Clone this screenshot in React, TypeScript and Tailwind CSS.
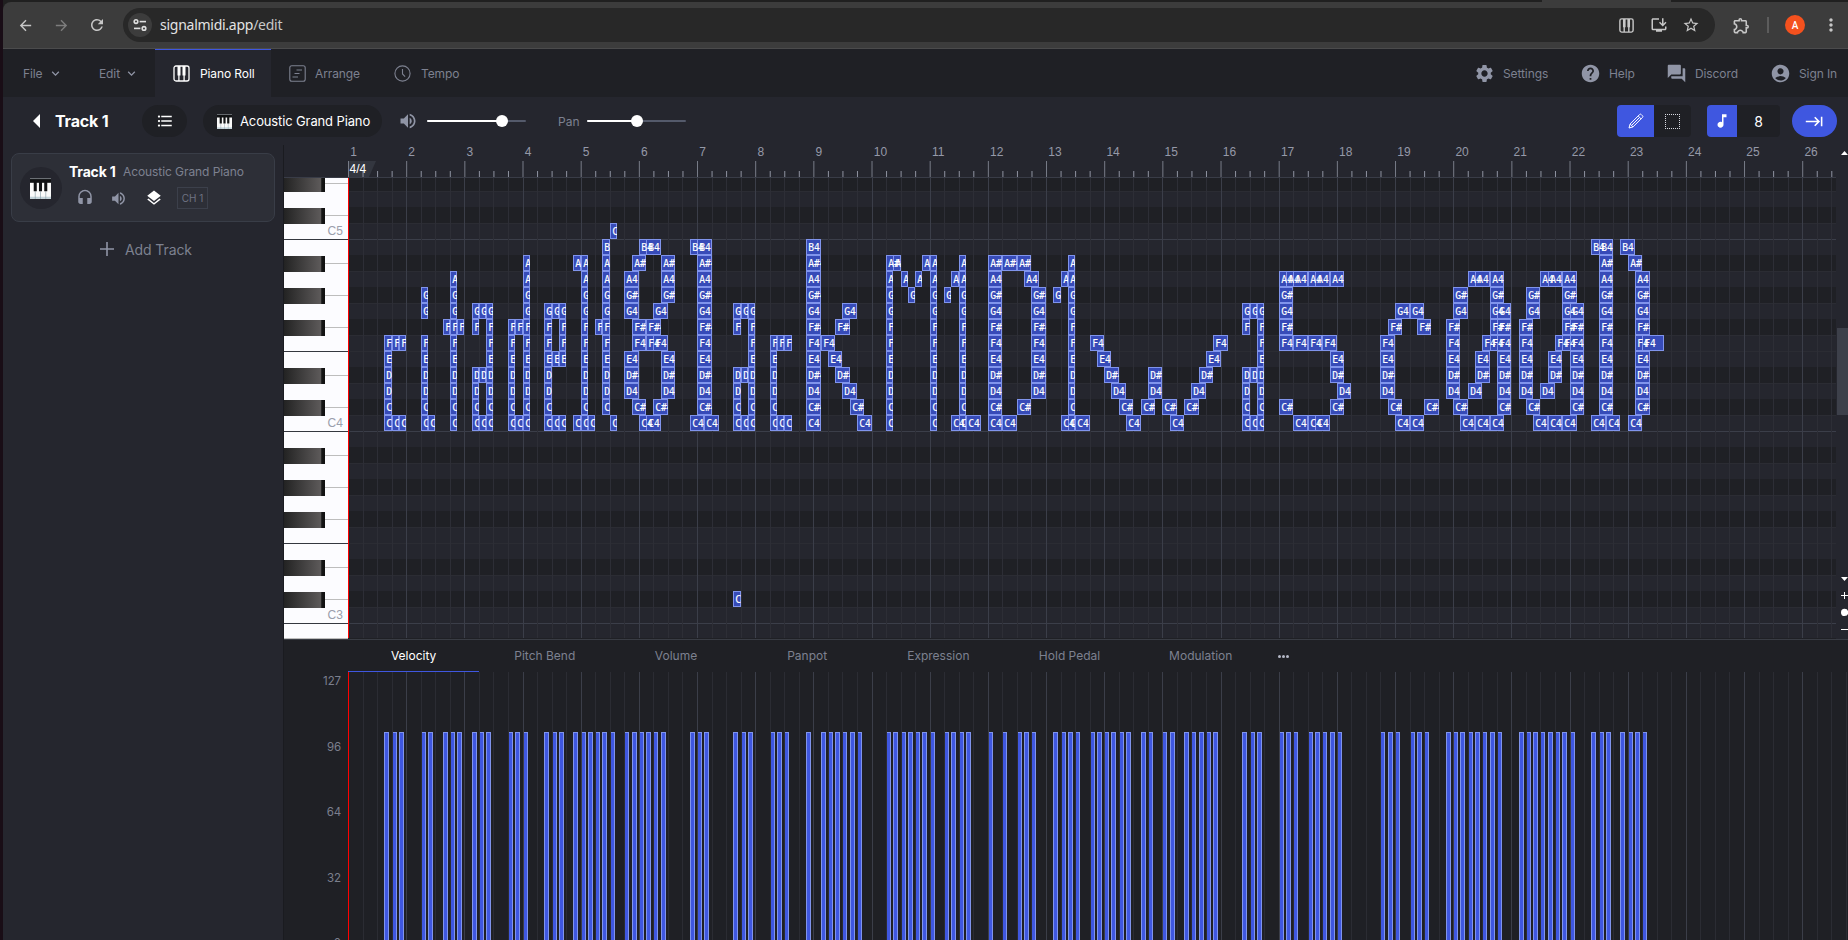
import React from "react";
import {
  MdArrowBack,
  MdArrowForward,
  MdRefresh,
  MdInstallDesktop,
  MdStarBorder,
  MdOutlineExtension,
  MdMoreVert,
  MdSettings,
  MdHelp,
  MdForum,
  MdAccountCircle,
  MdFormatListBulleted,
  MdVolumeUp,
  MdHeadset,
  MdLayers,
  MdKeyboardTab,
  MdMusicNote,
  MdKeyboardArrowDown,
} from "react-icons/md";

/* ---------- timeline geometry ---------- */
const STEP = 7.271; // width of an eighth note
const ROW = 16;
const stepX = (u: number) => Math.round(u * STEP);

const NAMES = ["C", "C#", "D", "D#", "E", "F", "F#", "G", "G#", "A", "A#", "B"];
const noteName = (r: number) => {
  const oct = 4 + Math.floor(r / 12);
  return NAMES[((r % 12) + 12) % 12] + oct;
};

type Note = [start: number, row: number, length: number];

const range = (hi: number, lo: number) => Array.from({ length: hi - lo + 1 }, (_, i) => hi - i);
const col = (u: number, len: number, rows: number[]): Note[] => rows.map((r) => [u, r, len]);

const NOTES: Note[] = [
  ...col(5, 1, range(5, 0)), ...col(6, 1, [5, 0]), ...col(7, 1, [5, 0]),
  ...col(10, 1, [8, 7, 5, 4, 3, 2, 1, 0]), ...col(11, 1, [0]),
  ...col(13, 1, [6]), ...col(14, 1, range(9, 0)), ...col(15, 1, [6]),
  ...col(17, 1, [7, 6, 3, 2, 1, 0]), ...col(18, 1, [7, 3, 0]), ...col(19, 1, range(7, 0)),
  ...col(22, 1, range(6, 0)), ...col(23, 1, [6, 0]), ...col(24, 1, range(10, 0)),
  ...col(27, 1, range(7, 0)), ...col(28, 1, [7, 4, 0]), ...col(29, 1, [7, 6, 5, 4, 0]),
  ...col(31, 1, [10, 0]), ...col(32, 1, range(10, 0)), ...col(33, 1, [0]),
  ...col(34, 1, [6]), ...col(35, 1, range(11, 1)), ...col(36, 1, [12, 0]),
  ...col(38, 2, [9, 8, 7, 4, 3, 2]), ...col(39, 2, [10, 6, 5, 1]), ...col(40, 2, [11, 0]),
  ...col(41, 2, [11, 6, 5, 0]), ...col(42, 2, [7, 5, 1]), ...col(43, 2, [10, 9, 8, 4, 3, 2]),
  ...col(47, 2, [11, 0]), ...col(48, 2, range(11, 1)), ...col(49, 2, [0]),
  ...col(53, 1, [7, 6, 3, 2, 1, 0, -11]), ...col(54, 1, [7, 3, 0]), ...col(55, 1, range(7, 0)),
  ...col(58, 1, range(5, 0)), ...col(59, 1, [5, 0]), ...col(60, 1, [5, 0]),
  ...col(63, 2, range(11, 0)), ...col(65, 2, [5]), ...col(66, 2, [4]), ...col(67, 2, [6, 3]),
  ...col(68, 2, [7, 2]), ...col(69, 2, [1]), ...col(70, 2, [0]),
  ...col(74, 2, [10]), ...col(74, 1, range(9, 0)), ...col(75, 1, [10]), ...col(76, 1, [9]),
  ...col(77, 1, [8]), ...col(78, 1, [9]), ...col(79, 1, [10]), ...col(80, 1, range(10, 0)),
  ...col(82, 1, [8]), ...col(83, 1, [9]), ...col(83, 2, [0]), ...col(84, 1, range(10, 0)), ...col(85, 2, [0]),
  ...col(88, 2, range(10, 0)), ...col(90, 2, [10, 0]), ...col(92, 2, [10, 1]), ...col(93, 2, [9]),
  ...col(94, 2, range(8, 2)),
  ...col(97, 1, [8]), ...col(98, 1, [9]), ...col(98, 2, [0]), ...col(99, 1, range(10, 0)), ...col(100, 2, [0]),
  ...col(102, 2, [5]), ...col(103, 2, [4]), ...col(104, 2, [3]), ...col(105, 2, [2]), ...col(106, 2, [1]),
  ...col(107, 2, [0]), ...col(109, 2, [1]), ...col(110, 2, [3, 2]), ...col(112, 2, [1]), ...col(113, 2, [0]),
  ...col(115, 2, [1]), ...col(116, 2, [2]), ...col(117, 2, [3]), ...col(118, 2, [4]), ...col(119, 2, [5]),
  ...col(123, 1, [7, 6, 3, 2, 1, 0]), ...col(124, 1, [7, 3, 0]), ...col(125, 1, range(7, 0)),
  ...col(128, 2, [9, 8, 7, 6, 5, 1]), ...col(129, 2, [9]), ...col(130, 2, [9, 5, 0]),
  ...col(132, 2, [9, 5, 0]), ...col(133, 2, [9, 0]), ...col(134, 2, [5]), ...col(135, 2, [9, 4, 3, 1]),
  ...col(136, 2, [2]),
  ...col(142, 2, [5, 4, 3, 2]), ...col(143, 2, [6, 1]), ...col(144, 2, [7, 0]), ...col(146, 2, [7, 0]),
  ...col(147, 2, [6]), ...col(148, 2, [1]),
  ...col(151, 2, range(6, 2)), ...col(152, 2, [8, 7, 1]), ...col(153, 2, [0]), ...col(154, 2, [9, 2]),
  ...col(155, 2, [9, 4, 3, 0]), ...col(156, 2, [5]), ...col(157, 2, [9, 8, 7, 6, 5, 0]), ...col(158, 2, range(7, 1)),
  ...col(161, 2, range(6, 2)), ...col(162, 2, [8, 7, 1]), ...col(163, 2, [0]), ...col(164, 2, [9, 2]),
  ...col(165, 2, [9, 4, 3, 0]), ...col(166, 2, [5]), ...col(167, 2, [9, 8, 7, 6, 5, 0]), ...col(168, 2, range(7, 1)),
  ...col(171, 2, [11, 0]), ...col(172, 2, range(11, 1)), ...col(173, 2, [0]),
  ...col(175, 2, [11]), ...col(176, 2, [10, 0]), ...col(177, 2, range(9, 1)), ...col(178, 3, [5]),
];

const STARTS = Array.from(new Set(NOTES.map((n) => n[0]))).sort((a, b) => a - b);
const BEATS = Array.from({ length: 104 }, (_, i) => i * 2);
const C4_TOP = 237; // y of the C4 row inside the grid
const rowTop = (r: number) => C4_TOP - r * ROW;
const isBlack = (r: number) => [1, 3, 6, 8, 10].includes(((r % 12) + 12) % 12);
const ROWS = range(15, -14);

/* ---------- icons ---------- */
const PianoOutline = ({ size, sw = 1.3 }: { size: number; sw?: number }) => (
  <svg width={size} height={size} viewBox="0 0 17 17" fill="none" stroke="currentColor" strokeWidth={sw}>
    <rect x="1" y="1" width="15" height="15" rx="2" />
    <path d="M5.9 10v6M11.1 10v6" />
    <path d="M4.5 1h3v9.5h-3zM9.5 1h3v9.5h-3z" fill="currentColor" stroke="none" />
  </svg>
);

const KeyboardEmoji = ({ size }: { size: number }) => (
  <svg width={size} height={size} viewBox="0 0 22 22">
    <rect x="0" y="0" width="22" height="1.6" fill="#6b6f74" />
    <rect x="0" y="1.4" width="22" height="4" fill="#0b0b0c" />
    <rect x="0" y="4.4" width="22" height="17.4" fill="#fafafa" />
    <rect x="0" y="19.6" width="22" height="2.2" fill="#c3d3da" />
    <path d="M5.5 14v8M11 14v8M16.5 14v8" stroke="#8fa3ad" strokeWidth="0.7" />
    <path d="M0 1.5h22v3.5H0zM3.9 4h3.2v10H3.9zM9.4 4h3.2v10H9.4zM14.9 4h3.2v10h-3.2z" fill="#111214" />
  </svg>
);

const SiteInfo = () => (
  <svg width="14" height="14" viewBox="0 0 14 14" fill="none" stroke="#e0e0e0" strokeWidth="1.6">
    <circle cx="3" cy="3.6" r="1.8" />
    <path d="M6.6 3.6H13" />
    <circle cx="11" cy="10.4" r="1.8" />
    <path d="M1 10.4h6.4" />
  </svg>
);

/* ---------- browser chrome ---------- */
const BrowserBar = () => (
  <div className="shrink-0">
    <div className="flex h-0.5 bg-[#202020]">
      <div className="ml-[1539px] w-[129px] bg-[#3c3c3c]" />
    </div>
    <div className="flex h-[46px] items-center rounded-tl-lg bg-[#3c3c3c] text-[#c7c7c7]">
      <MdArrowBack className="ml-3.5" size={17} />
      <MdArrowForward className="ml-[19px] text-[#7d7d7d]" size={17} />
      <MdRefresh className="ml-[18px]" size={18} />
      <div className="ml-[17px] flex h-[34px] w-[1592px] items-center rounded-full bg-[#282828] pr-[15px] pl-[5px]">
        <div className="flex size-6 items-center justify-center rounded-full bg-[#3c3c3c]">
          <SiteInfo />
        </div>
        <div className="ml-2 grow pb-px font-['Noto_Sans',sans-serif] text-[14px] tracking-[-0.26px] text-[#e3e3e3]">
          signalmidi.app<span className="text-[#c7c7c7]">/edit</span>
        </div>
        <PianoOutline size={15} sw={1.6} />
        <MdInstallDesktop className="ml-[16px]" size={18} />
        <MdStarBorder className="ml-[14px]" size={18} />
      </div>
      <MdOutlineExtension className="ml-[17px]" size={19} />
      <div className="ml-[16px] h-4 w-0.5 bg-[#5c5c5c]" />
      <div className="ml-4 flex size-5 items-center justify-center rounded-full bg-[#f4511e] font-['Roboto',sans-serif] text-[10px] font-medium text-white">
        A
      </div>
      <MdMoreVert className="ml-[16px]" size={20} />
    </div>
    <div className="h-px bg-[#4b4b4c]" />
  </div>
);

/* ---------- navigation ---------- */
const NavBar = () => (
  <div className="flex h-12 shrink-0 items-center bg-[#1f2025] text-[12px] tracking-[-0.1px] text-[#7d8190]">
    <div className="flex w-[76px] items-center pt-px pl-5">
      <span className="w-6">File</span>
      <MdKeyboardArrowDown className="ml-px text-[#9095a6]" size={15} />
    </div>
    <div className="flex w-[76px] items-center pt-px pl-5">
      <span className="w-6">Edit</span>
      <MdKeyboardArrowDown className="ml-px text-[#9095a6]" size={15} />
    </div>
    <div className="flex h-full w-[116px] items-center border-t border-[#3f57e0] bg-[#25262e] pl-[18px] text-white">
      <PianoOutline size={17} />
      <span className="ml-2.5">Piano Roll</span>
    </div>
    <div className="flex w-[105px] items-center pt-px pl-[18px]">
      <svg width="17" height="17" viewBox="0 0 17 17" fill="none" stroke="currentColor" strokeWidth="1.1">
        <rect x="0.8" y="0.8" width="15.4" height="15.4" rx="2" />
        <path d="M7.5 5h5.5M5.5 8.5h5M3.5 12h5.5" />
      </svg>
      <span className="ml-[9px]">Arrange</span>
    </div>
    <div className="flex grow items-center pt-px pl-[18px]">
      <svg width="17" height="17" viewBox="0 0 17 17" fill="none" stroke="currentColor" strokeWidth="1.1">
        <circle cx="8.5" cy="8.5" r="7.6" />
        <path d="M8.5 4v5l2.6 2.6" />
      </svg>
      <span className="ml-2.5">Tempo</span>
    </div>
    <div className="flex w-[106px] items-center pt-px">
      <MdSettings className="text-[#9095a6]" size={21} />
      <span className="ml-2">Settings</span>
    </div>
    <div className="flex w-[86px] items-center pt-px">
      <MdHelp className="text-[#9095a6]" size={21} />
      <span className="ml-2">Help</span>
    </div>
    <div className="flex w-[104px] items-center pt-px">
      <MdForum className="text-[#9095a6]" size={21} />
      <span className="ml-2">Discord</span>
    </div>
    <div className="flex w-[78px] items-center pt-px">
      <MdAccountCircle className="text-[#9095a6]" size={21} />
      <span className="ml-2">Sign In</span>
    </div>
  </div>
);

/* ---------- toolbar ---------- */
const Slider = ({ pos }: { pos: number }) => (
  <div className="relative h-0.5 w-[99px] rounded bg-[#545a6b]">
    <div className="h-full rounded bg-white" style={{ width: pos }} />
    <div className="absolute top-[-5px] size-3 rounded-full bg-white" style={{ left: pos - 6 }} />
  </div>
);

const ToolBar = () => (
  <div className="flex h-12 shrink-0 items-center bg-[#25262e] text-[13px] text-white">
    <svg className="ml-[29px]" width="8" height="14" viewBox="0 0 8 14">
      <path d="M8 0v14L1 7z" fill="white" />
    </svg>
    <div className="ml-[15px] w-[87px] text-[16px] font-bold tracking-[-0.2px]">Track 1</div>
    <div className="flex h-8 w-[45px] items-center justify-center rounded-full bg-[#1f2025]">
      <MdFormatListBulleted size={18} />
    </div>
    <div className="ml-4 flex h-8 w-[179px] items-center rounded-full bg-[#1f2025] pl-3.5">
      <KeyboardEmoji size={15} />
      <span className="ml-2 pt-px tracking-[-0.13px] whitespace-nowrap">Acoustic Grand Piano</span>
    </div>
    <MdVolumeUp className="ml-4 text-[#9095a6]" size={20} />
    <div className="ml-[9px]">
      <Slider pos={75} />
    </div>
    <div className="ml-8 w-[29px] pt-px text-[12px] text-[#7d8190]">Pan</div>
    <Slider pos={50} />
    <div className="grow" />
    <div className="flex h-8 overflow-hidden rounded bg-[#1f2025]">
      <div className="flex w-[37px] items-center justify-center bg-[#3f57e0]">
        <svg width="16" height="16" viewBox="0 0 16 16" fill="none" stroke="white" strokeWidth="1">
          <path d="M1 15l1.1-4L11.5 1.6a1.2 1.2 0 0 1 1.8 0l1.1 1.1a1.2 1.2 0 0 1 0 1.8L5 13.9zM10.2 3l2.9 2.9M2.1 11L5 13.9M3.8 12.2l7.6-7.6" />
        </svg>
      </div>
      <div className="flex w-[37px] items-center justify-center">
        <svg width="15" height="15" viewBox="0 0 15 15" fill="none" stroke="#d8dae2" strokeDasharray="1 1" shapeRendering="crispEdges">
          <path d="M0 0.5h15M0 14.5h15M0.5 2v12M14.5 2v12" />
        </svg>
      </div>
    </div>
    <div className="ml-4 flex h-8 overflow-hidden rounded bg-[#1f2025]">
      <div className="flex w-[30px] items-center justify-center bg-[#3f57e0]">
        <MdMusicNote size={18} />
      </div>
      <div className="flex w-[43px] items-center justify-center text-[14px]">8</div>
    </div>
    <div className="mr-[11px] ml-3 flex h-8 w-[45px] items-center justify-center rounded-full bg-[#3f57e0]">
      <MdKeyboardTab size={19} />
    </div>
  </div>
);

/* ---------- track list ---------- */
const TrackList = () => (
  <div className="w-[280px] shrink-0 bg-[#25262e] pt-2">
    <div className="ml-2 flex h-[69px] w-[264px] items-start rounded-lg border border-[#393d47] bg-[#2d2f37]">
      <div className="mt-[13px] ml-2 flex size-[42px] items-center justify-center rounded-full bg-[#25262e] pr-0.5">
        <KeyboardEmoji size={21} />
      </div>
      <div className="ml-[7px] pt-[7px]">
        <div className="flex h-5 items-center">
          <span className="w-[54px] text-[14px] font-bold tracking-[-0.2px] text-white">Track 1</span>
          <span className="pt-px text-[12px] tracking-[-0.08px] whitespace-nowrap text-[#7d8190]">Acoustic Grand Piano</span>
        </div>
        <div className="mt-[6px] flex h-[22px] items-center text-[#9095a6]">
          <MdHeadset className="ml-[7px]" size={18} />
          <MdVolumeUp className="ml-4" size={17} />
          <MdLayers className="ml-[18px] text-white" size={18} />
          <div className="ml-[14px] flex h-[22px] w-[31px] items-center justify-center border border-[#3c404b] text-[10px] text-[#6f7382]">
            CH 1
          </div>
        </div>
      </div>
    </div>
    <div className="mt-[17px] ml-[97px] flex h-5 items-center text-[14px] tracking-[-0.1px] text-[#7d8190]">
      <svg width="14" height="14" viewBox="0 0 14 14" stroke="#9095a6" strokeWidth="1.6">
        <path d="M7 0v14M0 7h14" />
      </svg>
      <span className="ml-[11px]">Add Track</span>
    </div>
  </div>
);

/* ---------- piano roll ---------- */
const Ruler = () => (
  <svg className="block" width="1552" height="33" fontFamily="'Liberation Sans', Arial, sans-serif" fontSize="12">
    <path d="M64 16h28l-7 16H64z" fill="#33363f" />
    {BEATS.map((u) => {
      const bar = u % 8 === 0;
      return (
        <rect key={u} x={64 + u * STEP} y={bar ? 16 : 26} width="1" height={bar ? 16 : 6} fill={bar ? "#787c88" : "#8f93a1"} />
      );
    })}
    {range(25, 0).map((b) => (
      <text key={b} x={66.2 + b * 8 * STEP} y="11" fill="#9599a8">
        {b + 1}
      </text>
    ))}
    <text x="65.5" y="28" fill="white">4/4</text>
    <rect x="0" y="32" width="1552" height="1" fill="#393c47" />
  </svg>
);

const Keyboard = () => (
  <svg className="block shrink-0" width="64" height="461" fontFamily="'Liberation Sans', Arial, sans-serif" fontSize="12">
    <defs>
      <linearGradient id="black-key" x1="0" x2="1" y1="0" y2="0">
        <stop offset="0" stopColor="#232323" />
        <stop offset="0.9" stopColor="#5d5a5a" />
        <stop offset="0.9" stopColor="#303030" />
        <stop offset="0.94" stopColor="#141414" />
        <stop offset="1" stopColor="#101010" />
      </linearGradient>
    </defs>
    <rect width="64" height="461" fill="#fcfcff" />
    {ROWS.map((r) => {
      const y = rowTop(r);
      const n = ((r % 12) + 12) % 12;
      if (isBlack(r))
        return (
          <g key={r}>
            <rect x="41" y={y + 8} width="23" height="1" fill="#bdbdbd" />
            <rect x="0" y={y + 1} width="41" height="16" fill="url(#black-key)" />
          </g>
        );
      return (
        <g key={r}>
          {(n === 0 || n === 5) && <rect x="0" y={y + 16} width="64" height="1" fill="#34373f" />}
          {n === 0 && (
            <text x="43.5" y={y + 12} fill="#9a9eac">
              {noteName(r)}
            </text>
          )}
        </g>
      );
    })}
    <rect x="0" y="460" width="64" height="1" fill="#bdbdbd" />
  </svg>
);

const Grid = () => (
  <svg className="block" width="1488" height="460">
    <rect width="1488" height="460" fill="#25262e" />
    {ROWS.map((r) => (
      <g key={r}>
        {isBlack(r) && <rect x="0" y={rowTop(r)} width="1488" height="16" fill="#1f2025" />}
        <rect x="0" y={rowTop(r) + 16} width="1488" height="1" fill={r % 12 === 0 ? "#3b3e49" : "#2b2c33"} />
      </g>
    ))}
    {BEATS.map((u) => (
      <rect key={u} x={stepX(u)} y="0" width="1" height="460" fill={u % 8 === 0 ? "#3b3e49" : "#2d2e36"} />
    ))}
    {NOTES.map(([u, r, len], i) => (
      <rect
        key={i}
        x={stepX(u) + 0.5}
        y={rowTop(r) + 0.5}
        width={stepX(u + len) - stepX(u) - 1}
        height={ROW - 1}
        fill="#374bb8"
        stroke="#8094ec"
      />
    ))}
    {NOTES.map(([u, r, len], i) => (
      <svg key={i} x={stepX(u)} y={rowTop(r)} width={stepX(u + len) - stepX(u)} height={ROW}>
        <text
          transform="translate(2.2 12) scale(0.88 1)"
          fontFamily="'DejaVu Sans Mono', monospace"
          fontSize="11"
          fill="white"
          stroke="white"
          strokeWidth="0.15"
        >
          {noteName(r)}
        </text>
      </svg>
    ))}
    <rect x="0" y="0" width="1" height="460" fill="#ff0000" />
  </svg>
);

const PianoRoll = () => (
  <div className="flex h-[495px] shrink-0 border-b border-[#393c44] bg-[#25262e]">
    <div className="w-[1552px] bg-[#1f2025]">
      <div className="bg-[#25262e]">
        <Ruler />
      </div>
      <div className="flex">
        <Keyboard />
        <Grid />
      </div>
    </div>
    <div className="flex w-3 flex-col overflow-hidden">
      <svg className="mt-1.5 ml-[5px] block shrink-0" width="8" height="5">
        <path d="M0 4h7L3.5 0z" fill="white" />
      </svg>
      <div className="mt-[172px] ml-px h-[87px] shrink-0 bg-[#3d404a]" />
      <svg className="mt-[162px] ml-[5px] block shrink-0" width="8" height="54" stroke="white" strokeWidth="1">
        <path d="M0 0h7L3.5 4z" fill="white" stroke="none" />
        <path d="M0 18.5h8M3.5 15v7" />
        <circle cx="3.6" cy="35.4" r="3.6" fill="white" stroke="none" />
        <path d="M0 52.5h8" />
      </svg>
    </div>
  </div>
);

/* ---------- control pane ---------- */
const TABS = ["Velocity", "Pitch Bend", "Volume", "Panpot", "Expression", "Hold Pedal", "Modulation"];

const ControlPane = () => (
  <div className="flex grow flex-col overflow-hidden bg-[#1f2025]">
    <div className="flex h-8 shrink-0 pl-16 text-[12px] text-[#7d8190]">
      {TABS.map((t, i) => (
        <div
          key={t}
          className={
            i === 0
              ? "flex w-[131.2px] items-center justify-center border-b border-[#3f57e0] text-white"
              : "flex w-[131.2px] items-center justify-center border-b border-transparent"
          }
        >
          {t}
        </div>
      ))}
      <div className="flex items-center gap-px pl-[12px]">
        <div className="size-[3px] rounded-full bg-[#b4b8c6]" />
        <div className="size-[3px] rounded-full bg-[#b4b8c6]" />
        <div className="size-[3px] rounded-full bg-[#b4b8c6]" />
      </div>
    </div>
    <svg className="block" width="1564" height="268" fontFamily="Inter, sans-serif" fontSize="11.5">
      {[127, 96, 64, 32, 0].map((v, i) => (
        <text key={v} x="57" y={13 + i * 65.5} textAnchor="end" fill="#7b7f8d" letterSpacing="-0.1">
          {v}
        </text>
      ))}
      {STARTS.map((u) => (
        <rect key={u} x={64 + stepX(u) + 0.5} y="60.5" width="4" height="220" fill="#3f57e0" stroke="#8094ec" />
      ))}
      {BEATS.map((u) => (
        <rect key={u} x={64 + stepX(u)} y="0" width="1" height="268" fill={u % 8 === 0 ? "#3b3e49" : "#2b2c33"} />
      ))}
      <rect x="64" y="0" width="1" height="268" fill="#ff0000" />
    </svg>
  </div>
);

export default function App() {
  return (
    <div className="flex h-[940px] w-[1848px] overflow-hidden bg-[#202020] font-['Inter',sans-serif]">
      <div className="w-[3px] shrink-0 bg-[#190d16]" />
      <div className="flex min-w-0 grow flex-col">
        <BrowserBar />
        <NavBar />
        <ToolBar />
        <div className="flex min-h-0 grow">
          <TrackList />
          <div className="flex min-w-0 grow flex-col border-l border-[#1a1b20]">
            <PianoRoll />
            <ControlPane />
          </div>
        </div>
      </div>
    </div>
  );
}
